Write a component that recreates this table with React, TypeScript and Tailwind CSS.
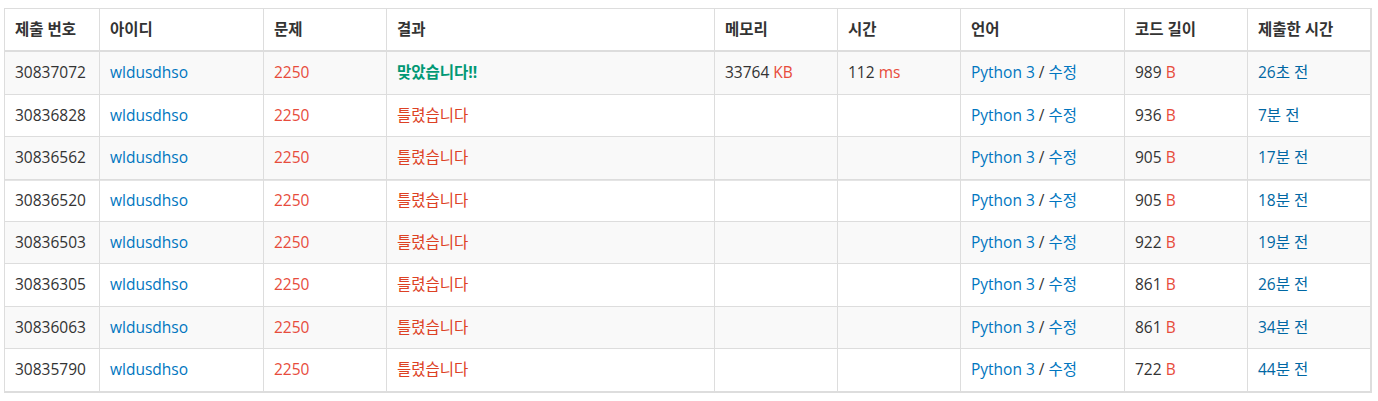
import React from "react";

type Row = {
  id: string;
  mem?: string;
  time?: string;
  ok: boolean;
  len: string;
  ago: string;
};

const rows: Row[] = [
  { id: "30837072", ok: true, mem: "33764", time: "112", len: "989", ago: "26초 전" },
  { id: "30836828", ok: false, len: "936", ago: "7분 전" },
  { id: "30836562", ok: false, len: "905", ago: "17분 전" },
  { id: "30836520", ok: false, len: "905", ago: "18분 전" },
  { id: "30836503", ok: false, len: "922", ago: "19분 전" },
  { id: "30836305", ok: false, len: "861", ago: "26분 전" },
  { id: "30836063", ok: false, len: "861", ago: "34분 전" },
  { id: "30835790", ok: false, len: "722", ago: "44분 전" },
];

const widths = ["w-[95px]", "w-[164px]", "w-[123px]", "w-[328px]", "w-[123px]", "w-[123px]", "w-[164px]", "w-[123px]", "w-[123px]"];
const headers = ["제출 번호", "아이디", "문제", "결과", "메모리", "시간", "언어", "코드 길이", "제출한 시간"];

export default function App() {
  return (
    <div
      className="bg-white pl-[4px] pt-[8px] text-[15.5px] leading-[21.4px] text-[#333]"
      style={{ fontFamily: '"Open Sans", "Noto Sans CJK KR", sans-serif' }}
    >
      <table className="w-[1367px] table-fixed border-collapse border-t border-l border-r-2 border-b-2 border-[#ddd]">
        <colgroup>
          {widths.map((w, i) => (
            <col key={i} className={w} />
          ))}
        </colgroup>
        <thead>
          <tr>
            {headers.map((h) => (
              <th
                key={h}
                className="border-r border-b-2 border-[#ddd] px-[10px] py-[10px] text-left font-bold"
              >
                {h}
              </th>
            ))}
          </tr>
        </thead>
        <tbody>
          {rows.map((r, i) => {
            const td = `border-r border-[#ddd] px-[10px] py-[10px] ${i === 3 ? "shadow-[inset_0_1px_0_#e4e4e4]" : ""}`;
            return (
              <tr
                key={r.id}
                className={`${i % 2 === 0 ? "bg-[#f9f9f9]" : "bg-white"} border-b border-[#ddd]`}
              >
                <td className={td}>{r.id}</td>
                <td className={`${td} text-[#0076c0]`}>wldusdhso</td>
                <td className={`${td} text-[#e74c3c]`}>2250</td>
                <td className={td}>
                  {r.ok ? (
                    <span className="font-bold text-[#009874]">맞았습니다!!</span>
                  ) : (
                    <span className="text-[#dd4124]">틀렸습니다</span>
                  )}
                </td>
                <td className={td}>
                  {r.mem && (
                    <>
                      {r.mem} <span className="text-[#e74c3c]">KB</span>
                    </>
                  )}
                </td>
                <td className={td}>
                  {r.time && (
                    <>
                      {r.time} <span className="text-[#e74c3c]">ms</span>
                    </>
                  )}
                </td>
                <td className={td}>
                  <span className="text-[#0076c0]">Python 3</span> / <span className="text-[#0076c0]">수정</span>
                </td>
                <td className={td}>
                  {r.len} <span className="text-[#e74c3c]">B</span>
                </td>
                <td className={`${td} text-[#0067a3]`}>{r.ago}</td>
              </tr>
            );
          })}
        </tbody>
      </table>
    </div>
  );
}
